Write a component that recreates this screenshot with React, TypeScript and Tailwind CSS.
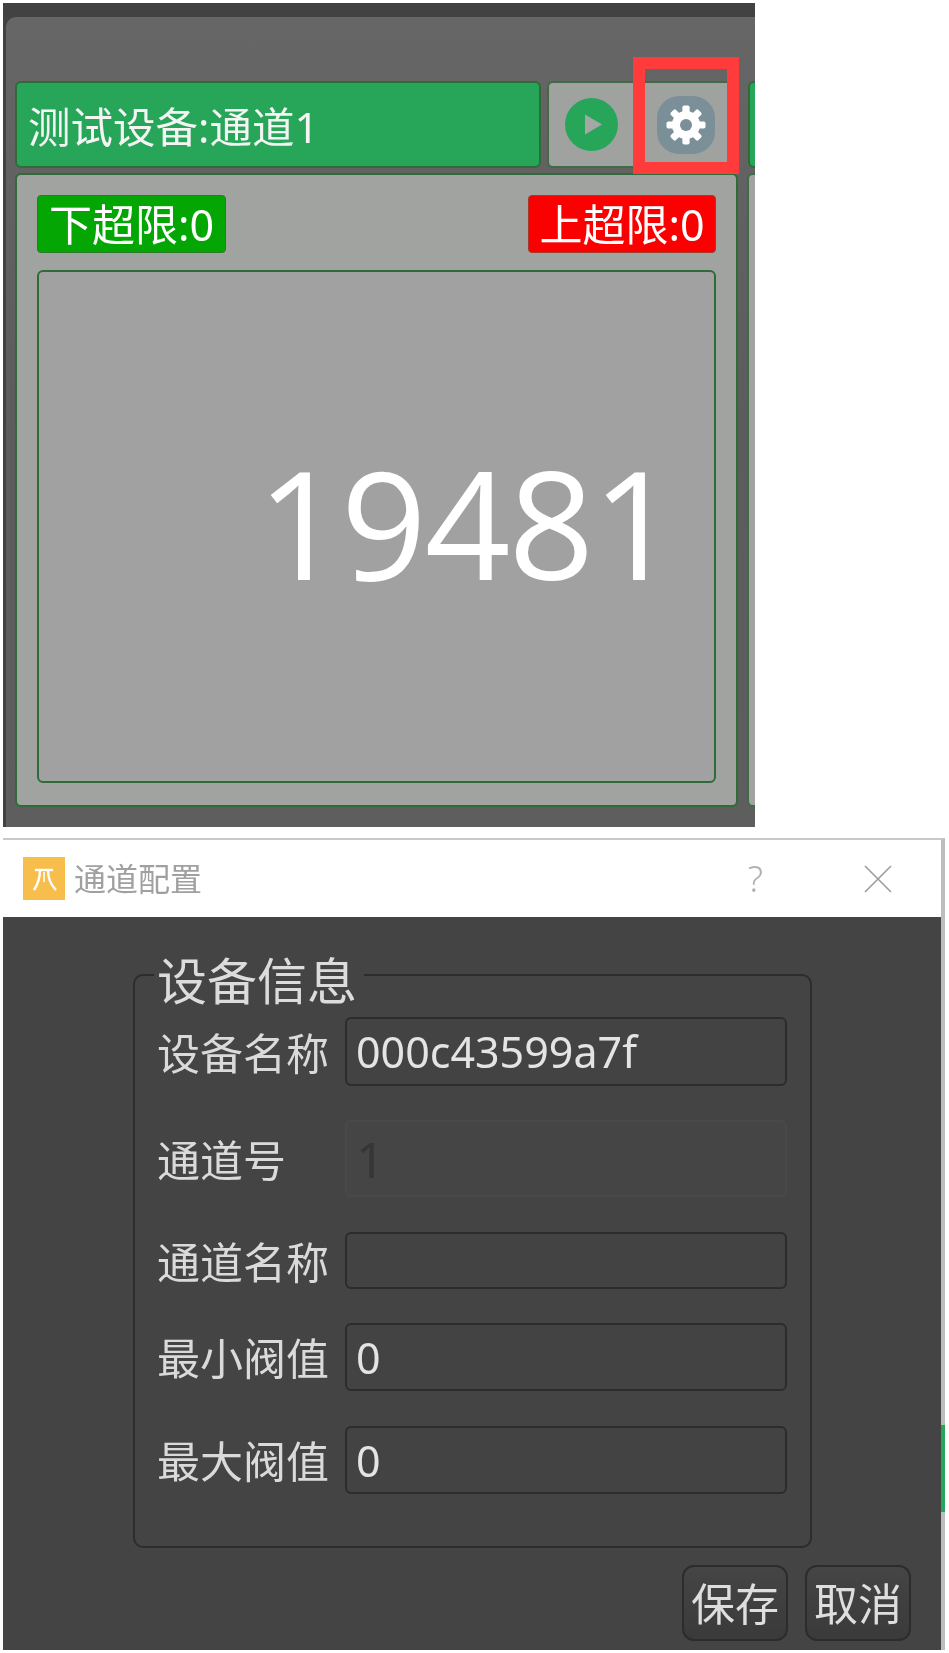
const cjk = "[font-family:'Noto_Sans','Noto_Sans_CJK_SC',sans-serif]";

function Gear() {
  const angles = [0, 45, 90, 135, 180, 225, 270, 315];
  return (
    <svg viewBox="-20 -20 40 40" className="w-[40px] h-[40px]">
      <circle r="14" fill="#fff" />
      {angles.map((a) => (
        <rect key={a} x="-3.6" y="-19.5" width="7.2" height="9" rx="1.8" fill="#fff" transform={`rotate(${a})`} />
      ))}
      <circle r="6" fill="#7b8f99" />
    </svg>
  );
}

function Play() {
  return (
    <svg viewBox="0 0 53 53" className="w-[53px] h-[53px]">
      <circle cx="26.5" cy="26.5" r="26.5" fill="#27a65a" />
      <path d="M20 16.5 L37 26.5 L20 36.5 Z" fill="#a3a8a4" />
    </svg>
  );
}

function Logo() {
  return (
    <div className="w-[42px] h-[43px] bg-[#f8be4c] flex items-center justify-center">
      <svg viewBox="0 0 42 43" className="w-[42px] h-[43px]" fill="none" stroke="#fff" strokeWidth="2.4">
        <path d="M12 13 H30" />
        <path d="M17 13 C17 21 15 27 11 33" />
        <path d="M25 13 C25 22 28 28 33 33" />
        <path d="M21 15 V25" strokeWidth="1.6" />
      </svg>
    </div>
  );
}

function Row({ label, value, h, gap, disabled }: { label: string; value: string; h: string; gap: string; disabled?: boolean }) {
  return (
    <div className={`flex items-center ${gap}`}>
      <div className={`w-[188px] shrink-0 pt-[3px] text-[43px] leading-none text-[#dadada] ${cjk}`}>{label}</div>
      <div
        className={`w-[442px] ${h} rounded-[6px] border-2 flex items-center pl-[9px] pt-[2px] ${cjk} ${
          disabled
            ? "border-[#494949] bg-[#454545] text-[#343638] text-[50px]"
            : "border-[#2c2c2c] bg-[#434343] text-[#e4e4e4] text-[43px]"
        }`}
      >
        {value}
      </div>
    </div>
  );
}

export default function App() {
  return (
    <div className="relative w-[949px] h-[1653px] bg-white overflow-hidden blur-[0.5px]">
      <div className="ml-[3px] mt-[3px] w-[752px] h-[824px] bg-[#424242] pt-[14px] pl-[3px] overflow-hidden">
        <div className="h-[810px] rounded-tl-[10px] bg-gradient-to-b from-[#666666] via-[#5c5c5c] to-[#5e5e5e] pt-[64px] pl-[9px]">
          <div className="flex gap-[6px] w-[800px]">
            <div className={`w-[526px] h-[87px] shrink-0 rounded-[6px] bg-[#27a65a] border-2 border-[#2f6b38] flex items-center pl-[11px] pt-[4px] text-[42.5px] text-[#f4f4f4] ${cjk}`}>
              测试设备:通道1
            </div>
            <div className="w-[192px] h-[87px] shrink-0 rounded-[6px] bg-[#a0a2a0] border-2 border-[#3f6b45] flex items-center pl-[16px] gap-[39px]">
              <Play />
              <div className="w-[58px] h-[58px] rounded-[22px] bg-[#7b8f99] flex items-center justify-center">
                <Gear />
              </div>
            </div>
            <div className="ml-[3px] w-[40px] h-[87px] shrink-0 rounded-l-[6px] bg-[#27a65a] border-2 border-[#2f6b38]" />
          </div>
          <div className="flex gap-[9px] mt-[5px] w-[800px]">
            <div className="w-[723px] h-[634px] shrink-0 rounded-[6px] bg-[#a0a3a0] border-2 border-[#2f6b38] px-[20px] pt-[20px]">
              <div className={`flex justify-between text-[43px] text-white ${cjk}`}>
                <div className="w-[189px] h-[58px] rounded-[4px] bg-[#04a604] border border-[#2a7a2a] flex items-center justify-center pt-[2px]">下超限:0</div>
                <div className="w-[188px] h-[58px] rounded-[4px] bg-[#fb0000] border border-[#a33a2a] flex items-center justify-center pt-[2px]">上超限:0</div>
              </div>
              <div className={`mt-[17px] h-[513px] rounded-[6px] bg-[#a1a1a1] border-2 border-[#2f6b38] flex items-center justify-end pr-[38px] pb-[9px] text-[150px] leading-none tracking-[-2px] text-white [font-family:'Open_Sans',sans-serif]`}>
                19481
              </div>
            </div>
            <div className="w-[40px] h-[634px] shrink-0 rounded-l-[6px] bg-[#a0a3a0] border-2 border-[#3f6b45]" />
          </div>
        </div>
      </div>

      <div className="absolute left-[633px] top-[57px] w-[106px] h-[117px] border-[12px] border-[#ff3b3b]" />

      <div className="ml-[3px] mt-[11px] w-[942px] h-[812px] border-t-2 border-r-[4px] border-t-[#c9c9c9] border-r-[#bdbdbd] flex flex-col">
        <div className="h-[77px] bg-white flex items-center pl-[20px] shrink-0">
          <Logo />
          <span className={`ml-[9px] text-[32px] leading-none text-[#a0a0a0] ${cjk}`}>通道配置</span>
          <span className={`ml-auto text-[36px] leading-none text-[#b0b0b0] font-light ${cjk}`}>?</span>
          <svg viewBox="0 0 28 28" className="w-[28px] h-[28px] ml-[101px] mr-[49px]" stroke="#9c9c9c" strokeWidth="1.6">
            <path d="M1 1 L27 27 M27 1 L1 27" />
          </svg>
        </div>
        <div className="flex-1 bg-[#444444] pt-[57px] pl-[130px] relative">
          <div className="relative w-[679px] h-[574px] rounded-[10px] border-2 border-[#2c2c2c] pt-[41px] pl-[22px]">
            <div className={`absolute left-[19px] -top-[25px] bg-[#444444] pl-[3px] pr-[7px] text-[50px] leading-[60px] text-[#dcdcdc] ${cjk}`}>
              设备信息
            </div>
            <div className="flex flex-col">
              <Row label="设备名称" value="000c43599a7f" h="h-[69px]" gap="" />
              <Row label="通道号" value="1" h="h-[77px]" gap="mt-[34px]" disabled />
              <Row label="通道名称" value="" h="h-[57px]" gap="mt-[35px]" />
              <Row label="最小阀值" value="0" h="h-[68px]" gap="mt-[34px]" />
              <Row label="最大阀值" value="0" h="h-[68px]" gap="mt-[35px]" />
            </div>
          </div>
          <div className={`flex gap-[17px] mt-[17px] ml-[549px] text-[44px] text-[#dedede] ${cjk}`}>
            {["保存", "取消"].map((t) => (
              <div key={t} className="w-[106px] h-[76px] rounded-[12px] border-2 border-[#2c2c2c] bg-gradient-to-b from-[#454545] to-[#3a3a3a] flex items-center justify-center leading-none pt-[1px]">
                {t}
              </div>
            ))}
          </div>
        </div>
      </div>
      <div className="absolute left-[941px] top-[1425px] w-[4px] h-[87px] bg-[#27a65a]" />
    </div>
  );
}
